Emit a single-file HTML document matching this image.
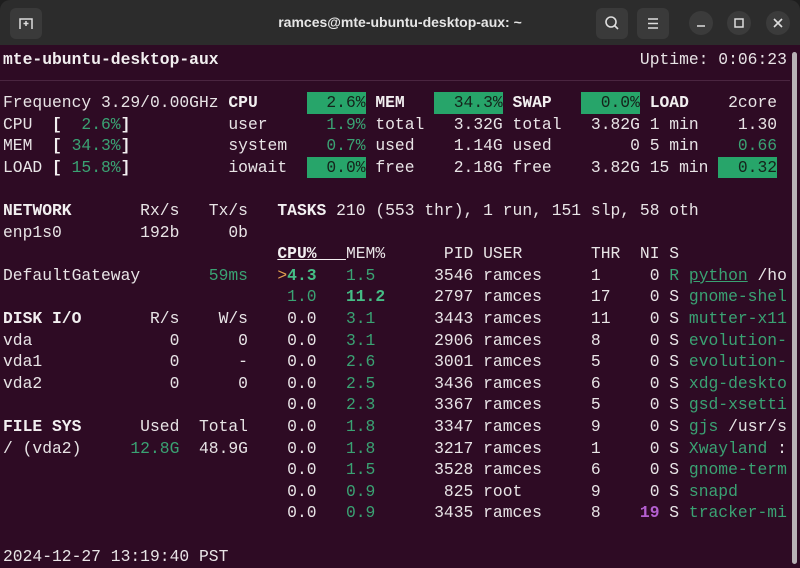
<!DOCTYPE html>
<html><head><meta charset="utf-8"><style>
*{margin:0;padding:0;box-sizing:border-box}
body{width:800px;height:568px;overflow:hidden;background:#1e1e1e;font-family:"Liberation Mono",monospace}
#tb{position:absolute;left:0;top:0;width:800px;height:45px;background:#2c2c2c;border-radius:10px 10px 0 0}
#title{position:absolute;left:0;width:800px;top:14px;text-align:center;color:#e6e6e6;font:bold 14px "Liberation Sans",sans-serif}
.btn{position:absolute;top:8px;width:32px;height:31px;background:#3a3a3a;border-radius:6px}
.cir{position:absolute;top:11px;width:24px;height:24px;background:#3b3b3b;border-radius:50%}
#term{position:absolute;left:0;top:45px;width:800px;height:523px;background:#2e0b24}
#sb{position:absolute;left:792px;top:52px;width:5px;height:512px;background:#cfcfcf;border-radius:3px;opacity:.85}
.r{position:absolute;left:3px;width:790px;height:21.6px;line-height:21.6px;font-size:16.33px;color:#e8e4e6;white-space:pre}
.r i{position:absolute;font-style:normal;top:0}
b{font-weight:bold;color:#f2eff0}
.g{color:#3aa273}
.gb{color:#45bd85;font-weight:bold}
.bx{background:#27a56a;color:#15231b}
.u{text-decoration:underline}
.o{color:#e0a050}
.p{color:#b45fd0;font-weight:bold}
</style></head><body>
<div id="tb">
 <div class="btn" style="left:10px"><svg width="32" height="31" viewBox="0 0 32 31"><path d="M10 21V11h12v10M16 13v5M13.5 15.5h5" stroke="#ddd" stroke-width="1.5" fill="none"/></svg></div>
 <div id="title">ramces@mte-ubuntu-desktop-aux: ~</div>
 <div class="btn" style="left:596px"><svg width="32" height="31" viewBox="0 0 32 31"><circle cx="15" cy="14" r="5" stroke="#ddd" stroke-width="1.6" fill="none"/><path d="M18.5 17.5l3.5 3.5" stroke="#ddd" stroke-width="1.6"/></svg></div>
 <div class="btn" style="left:637px"><svg width="32" height="31" viewBox="0 0 32 31"><path d="M11 11h10M11 15.5h10M11 20h10" stroke="#ddd" stroke-width="1.5"/></svg></div>
 <div class="cir" style="left:689px"><svg width="24" height="24"><path d="M8 15h8" stroke="#ddd" stroke-width="1.5"/></svg></div>
 <div class="cir" style="left:727px"><svg width="24" height="24"><rect x="8" y="8" width="8" height="8" stroke="#ddd" stroke-width="1.5" fill="none"/></svg></div>
 <div class="cir" style="left:766px"><svg width="24" height="24"><path d="M8 8l8 8M16 8l-8 8" stroke="#ddd" stroke-width="1.6"/></svg></div>
</div>
<div id="term"></div>
<div style="position:absolute;left:0;top:80px;width:790px;height:1px;background:#4a2540"></div>
<div id="sb"></div>

<div class="r" style="top:49px"><i style="left:0ch"><b>mte-ubuntu-desktop-aux</b></i><i style="left:65ch">Uptime: 0:06:23</i></div>

<div class="r" style="top:92px"><i style="left:0">Frequency 3.29/0.00GHz</i><i style="left:23ch"><b>CPU</b></i><i style="left:31ch" class="bx">  2.6%</i><i style="left:38ch"><b>MEM</b></i><i style="left:44ch" class="bx">  34.3%</i><i style="left:52ch"><b>SWAP</b></i><i style="left:59ch" class="bx">  0.0%</i><i style="left:66ch"><b>LOAD</b></i><i style="left:74ch">2core</i></div>
<div class="r" style="top:113.6px"><i style="left:0">CPU  <b>[</b><span class="g">  2.6%</span><b>]</b></i><i style="left:23ch">user</i><i style="left:33ch" class="g">1.9%</i><i style="left:38ch">total</i><i style="left:46ch">3.32G</i><i style="left:52ch">total</i><i style="left:60ch">3.82G</i><i style="left:66ch">1 min</i><i style="left:75ch">1.30</i></div>
<div class="r" style="top:135.2px"><i style="left:0">MEM  <b>[</b><span class="g"> 34.3%</span><b>]</b></i><i style="left:23ch">system</i><i style="left:33ch" class="g">0.7%</i><i style="left:38ch">used</i><i style="left:46ch">1.14G</i><i style="left:52ch">used</i><i style="left:64ch">0</i><i style="left:66ch">5 min</i><i style="left:75ch" class="g">0.66</i></div>
<div class="r" style="top:156.8px"><i style="left:0">LOAD <b>[</b><span class="g"> 15.8%</span><b>]</b></i><i style="left:23ch">iowait</i><i style="left:31ch" class="bx">  0.0%</i><i style="left:38ch">free</i><i style="left:46ch">2.18G</i><i style="left:52ch">free</i><i style="left:60ch">3.82G</i><i style="left:66ch">15 min</i><i style="left:73ch" class="bx">  0.32</i></div>

<div class="r" style="top:200px"><i style="left:0"><b>NETWORK</b></i><i style="left:14ch">Rx/s</i><i style="left:21ch">Tx/s</i><i style="left:28ch"><b>TASKS</b> 210 (553 thr), 1 run, 151 slp, 58 oth</i></div>
<div class="r" style="top:221.6px"><i style="left:0">enp1s0</i><i style="left:14ch">192b</i><i style="left:23ch">0b</i></div>
<div class="r" style="top:243.2px"><i style="left:28ch"><b class="u">CPU%   </b></i><i style="left:35ch">MEM%</i><i style="left:45ch">PID</i><i style="left:49ch">USER</i><i style="left:60ch">THR</i><i style="left:65ch">NI</i><i style="left:68ch">S</i></div>
<div class="r" style="top:264.8px"><i style="left:0">DefaultGateway</i><i style="left:21ch" class="g">59ms</i><i style="left:28ch"><span class="o">&gt;</span><span class="gb">4.3</span></i><i style="left:35ch" class="g">1.5</i><i style="left:44ch">3546</i><i style="left:49ch">ramces</i><i style="left:60ch">1</i><i style="left:66ch">0</i><i style="left:68ch" class="g">R</i><i style="left:70ch"><span class="g u">python</span> /ho</i></div>
<div class="r" style="top:286.4px"><i style="left:29ch" class="g">1.0</i><i style="left:35ch" class="gb">11.2</i><i style="left:44ch">2797</i><i style="left:49ch">ramces</i><i style="left:60ch">17</i><i style="left:66ch">0</i><i style="left:68ch">S</i><i style="left:70ch" class="g">gnome-shel</i></div>
<div class="r" style="top:308px"><i style="left:0"><b>DISK I/O</b></i><i style="left:15ch">R/s</i><i style="left:22ch">W/s</i><i style="left:29ch">0.0</i><i style="left:35ch" class="g">3.1</i><i style="left:44ch">3443</i><i style="left:49ch">ramces</i><i style="left:60ch">11</i><i style="left:66ch">0</i><i style="left:68ch">S</i><i style="left:70ch" class="g">mutter-x11</i></div>
<div class="r" style="top:329.6px"><i style="left:0">vda</i><i style="left:17ch">0</i><i style="left:24ch">0</i><i style="left:29ch">0.0</i><i style="left:35ch" class="g">3.1</i><i style="left:44ch">2906</i><i style="left:49ch">ramces</i><i style="left:60ch">8</i><i style="left:66ch">0</i><i style="left:68ch">S</i><i style="left:70ch" class="g">evolution-</i></div>
<div class="r" style="top:351.2px"><i style="left:0">vda1</i><i style="left:17ch">0</i><i style="left:24ch">-</i><i style="left:29ch">0.0</i><i style="left:35ch" class="g">2.6</i><i style="left:44ch">3001</i><i style="left:49ch">ramces</i><i style="left:60ch">5</i><i style="left:66ch">0</i><i style="left:68ch">S</i><i style="left:70ch" class="g">evolution-</i></div>
<div class="r" style="top:372.8px"><i style="left:0">vda2</i><i style="left:17ch">0</i><i style="left:24ch">0</i><i style="left:29ch">0.0</i><i style="left:35ch" class="g">2.5</i><i style="left:44ch">3436</i><i style="left:49ch">ramces</i><i style="left:60ch">6</i><i style="left:66ch">0</i><i style="left:68ch">S</i><i style="left:70ch" class="g">xdg-deskto</i></div>
<div class="r" style="top:394.4px"><i style="left:29ch">0.0</i><i style="left:35ch" class="g">2.3</i><i style="left:44ch">3367</i><i style="left:49ch">ramces</i><i style="left:60ch">5</i><i style="left:66ch">0</i><i style="left:68ch">S</i><i style="left:70ch" class="g">gsd-xsetti</i></div>
<div class="r" style="top:416px"><i style="left:0"><b>FILE SYS</b></i><i style="left:14ch">Used</i><i style="left:20ch">Total</i><i style="left:29ch">0.0</i><i style="left:35ch" class="g">1.8</i><i style="left:44ch">3347</i><i style="left:49ch">ramces</i><i style="left:60ch">9</i><i style="left:66ch">0</i><i style="left:68ch">S</i><i style="left:70ch"><span class="g">gjs</span> /usr/s</i></div>
<div class="r" style="top:437.6px"><i style="left:0">/ (vda2)</i><i style="left:13ch" class="g">12.8G</i><i style="left:20ch">48.9G</i><i style="left:29ch">0.0</i><i style="left:35ch" class="g">1.8</i><i style="left:44ch">3217</i><i style="left:49ch">ramces</i><i style="left:60ch">1</i><i style="left:66ch">0</i><i style="left:68ch">S</i><i style="left:70ch"><span class="g">Xwayland</span> :</i></div>
<div class="r" style="top:459.2px"><i style="left:29ch">0.0</i><i style="left:35ch" class="g">1.5</i><i style="left:44ch">3528</i><i style="left:49ch">ramces</i><i style="left:60ch">6</i><i style="left:66ch">0</i><i style="left:68ch">S</i><i style="left:70ch" class="g">gnome-term</i></div>
<div class="r" style="top:480.8px"><i style="left:29ch">0.0</i><i style="left:35ch" class="g">0.9</i><i style="left:45ch">825</i><i style="left:49ch">root</i><i style="left:60ch">9</i><i style="left:66ch">0</i><i style="left:68ch">S</i><i style="left:70ch" class="g">snapd</i></div>
<div class="r" style="top:502.4px"><i style="left:29ch">0.0</i><i style="left:35ch" class="g">0.9</i><i style="left:44ch">3435</i><i style="left:49ch">ramces</i><i style="left:60ch">8</i><i style="left:65ch" class="p">19</i><i style="left:68ch">S</i><i style="left:70ch" class="g">tracker-mi</i></div>

<div class="r" style="top:545.6px"><i style="left:0">2024-12-27 13:19:40 PST</i></div>
</body></html>
